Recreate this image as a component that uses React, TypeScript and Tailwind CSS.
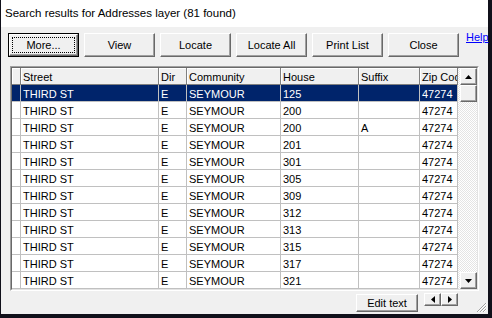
import React from "react";

const ROWS = [
  { house: "125", suffix: "" },
  { house: "200", suffix: "" },
  { house: "200", suffix: "A" },
  { house: "201", suffix: "" },
  { house: "301", suffix: "" },
  { house: "305", suffix: "" },
  { house: "309", suffix: "" },
  { house: "312", suffix: "" },
  { house: "313", suffix: "" },
  { house: "315", suffix: "" },
  { house: "317", suffix: "" },
  { house: "321", suffix: "" },
];

const COLS = [
  { label: "Street", w: "w-[138px]" },
  { label: "Dir", w: "w-[28px]" },
  { label: "Community", w: "w-[94px]" },
  { label: "House", w: "w-[78px]" },
  { label: "Suffix", w: "w-[61px]" },
  { label: "Zip Code", w: "w-[38px]" },
];

const raised =
  "border border-t-white border-l-white border-r-[#696969] border-b-[#696969] shadow-[inset_-1px_-1px_0_#a0a0a0]";

function Btn({ label, className = "" }: { label: string; className?: string }) {
  return (
    <div
      className={`flex shrink-0 items-center justify-center bg-[#f0f0f0] text-[11px] text-black ${raised} ${className}`}
    >
      {label}
    </div>
  );
}

function DefaultBtn({ label }: { label: string }) {
  return (
    <div className="mt-[3px] h-[24px] w-[71px] shrink-0 border border-black">
      <div className={`relative flex h-full items-center justify-center bg-[#f0f0f0] text-[11px] ${raised}`}>
        {label}
        {/* focus rect */}
        <div className="absolute inset-[2px] border border-dotted border-black" />
      </div>
    </div>
  );
}

function Tri({ dir }: { dir: "up" | "down" | "left" | "right" }) {
  const pts = {
    up: "0,4 7,4 3.5,0",
    down: "0,0 7,0 3.5,4",
    left: "4,0 4,7 0,3.5",
    right: "0,0 0,7 4,3.5",
  }[dir];
  const horiz = dir === "up" || dir === "down";
  return (
    <svg width={horiz ? 7 : 4} height={horiz ? 4 : 7} viewBox={horiz ? "0 0 7 4" : "0 0 4 7"}>
      <polygon points={pts} fill="#000" />
    </svg>
  );
}

function ScrollBtn({ dir }: { dir: "up" | "down" }) {
  return (
    <div className={`flex h-[17px] w-[17px] shrink-0 items-center justify-center bg-[#f0f0f0] ${raised}`}>
      <Tri dir={dir} />
    </div>
  );
}

export default function App() {
  return (
    <div className="flex h-[318px] w-[492px] overflow-hidden bg-[#10101a] font-['Liberation_Sans',Arial,sans-serif] text-black">
      <div className="relative ml-[1px] flex h-[314px] w-[487px] flex-col bg-[#f0f0f0]">
        {/* Title */}
        <div className="flex h-[27px] shrink-0 items-center bg-white pl-[4px] text-[11.5px]">
          Search results for Addresses layer (81 found)
        </div>

        {/* Button row */}
        <div className="mt-[3px] flex h-[27px] shrink-0 items-start gap-[5px] pl-[7px]">
          <DefaultBtn label="More..." />
          <Btn label="View" className="mt-[3px] h-[24px] w-[71px]" />
          <Btn label="Locate" className="mt-[3px] h-[24px] w-[71px]" />
          <Btn label="Locate All" className="mt-[3px] h-[24px] w-[71px]" />
          <Btn label="Print List" className="mt-[3px] h-[24px] w-[71px]" />
          <Btn label="Close" className="mt-[3px] h-[24px] w-[71px]" />
          <a className="ml-[2px] mt-[1px] text-[11px] leading-[13px] text-[#0000ff] underline">Help</a>
        </div>

        {/* Grid frame */}
        <div className="ml-[9px] mt-[9px] w-[469px] shrink-0 border border-t-[#a0a0a0] border-l-[#a0a0a0] border-r-white border-b-white">
          <div className="flex border border-t-[#696969] border-l-[#696969] border-r-[#e3e3e3] border-b-[#e3e3e3] bg-white">
            <div className="flex w-[446px] flex-col text-[11px] leading-[13px]">
              {/* Header */}
              <div className="flex h-[17px] bg-[#f0f0f0]">
                <div className="w-[9px] shrink-0 border-r border-b border-[#808080] shadow-[inset_1px_1px_0_#ffffff]" />
                {COLS.map((c) => (
                  <div
                    key={c.label}
                    className={`${c.w} shrink-0 overflow-hidden whitespace-nowrap border-r border-b border-[#808080] pl-[2px] pt-[3px] shadow-[inset_1px_1px_0_#ffffff]`}
                  >
                    {c.label}
                  </div>
                ))}
              </div>
              {/* Rows */}
              {ROWS.map((r, i) => {
                const sel = i === 0;
                const cell = `shrink-0 overflow-hidden whitespace-nowrap border-r border-b border-[#c0c0c0] pl-[2px] pt-[3px] ${
                  sel ? "bg-[#00246b] text-white" : "bg-white text-black"
                }`;
                const vals = ["THIRD ST", "E", "SEYMOUR", r.house, r.suffix, "47274"];
                return (
                  <div key={i} className="flex h-[17px]">
                    <div className={`w-[9px] ${cell}`} />
                    {COLS.map((c, j) => (
                      <div key={c.label} className={`${c.w} ${cell}`}>
                        {vals[j]}
                      </div>
                    ))}
                  </div>
                );
              })}
            </div>

            {/* Vertical scrollbar */}
            <div className="flex h-[221px] w-[19px] flex-col bg-[image:repeating-conic-gradient(#ffffff_0%_25%,#e4e4e4_0%_50%)] bg-[length:2px_2px] pl-[2px]">
              <ScrollBtn dir="up" />
              <div className={`h-[17px] w-[17px] shrink-0 bg-[#f0f0f0] ${raised}`} />
              <div className="flex-1" />
              <ScrollBtn dir="down" />
            </div>
          </div>
        </div>

        {/* Bottom row */}
        <div className="flex h-[23px] shrink-0 items-start justify-end pr-[30px]">
          <Btn label="Edit text" className="mt-[3px] h-[18px] w-[62px]" />
          <div className="ml-[6px] mt-[2px] flex">
            <div className={`flex h-[13px] w-[17px] items-center justify-center bg-[#f0f0f0] ${raised}`}>
              <Tri dir="left" />
            </div>
            <div className={`flex h-[13px] w-[17px] items-center justify-center bg-[#f0f0f0] ${raised}`}>
              <Tri dir="right" />
            </div>
          </div>
        </div>

        {/* Size grip */}
        <svg className="absolute bottom-[1px] right-[1px]" width="11" height="11" viewBox="0 0 11 11">
          <path d="M10 1 L1 10 M10 4 L4 10 M10 7 L7 10" stroke="#a0a0a0" strokeWidth="1" />
          <path d="M11 1 L2 10 M11 4 L5 10 M11 7 L8 10" stroke="#ffffff" strokeWidth="1" />
        </svg>
      </div>
    </div>
  );
}
